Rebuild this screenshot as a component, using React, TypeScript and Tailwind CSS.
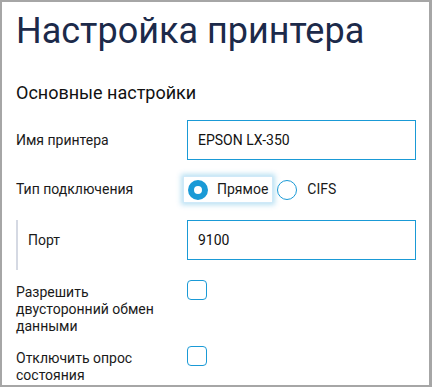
const labelCls = "text-[14px] leading-[17px] text-[#1a1a1a]";

function TextField({ value }: { value: string }) {
  return (
    <input
      type="text"
      defaultValue={value}
      className="w-full h-[40px] border border-[#1a9ad6] pl-[10px] text-[14px] text-[#111] outline-none [font-family:Roboto,sans-serif]"
    />
  );
}

function Checkbox() {
  return (
    <span className="block w-[20px] h-[20px] rounded-[4px] border border-[#1a9ad6] bg-white" />
  );
}

export default function App() {
  return (
    <div className="w-[432px] h-[387px] overflow-hidden bg-white border-2 border-r-[3px] border-[#a6a6a6] pl-[14px] pr-[13px] pt-[8px] [font-family:Roboto,sans-serif]">
      <h1 className="text-[36px] leading-[42px] text-[#1c2a4a]">Настройка принтера</h1>

      <h2 className="mt-[29px] text-[18px] leading-[24px] text-[#111]">Основные настройки</h2>

      {/* printer name */}
      <div className="mt-[15px] grid grid-cols-[171px_1fr] items-center">
        <span className={labelCls}>Имя принтера</span>
        <TextField value="EPSON LX-350" />
      </div>

      {/* connection type */}
      <div className="mt-[16px] grid grid-cols-[167px_1fr] items-center">
        <span className={labelCls}>Тип подключения</span>
        <div className="flex items-center">
          <label className="flex items-center gap-[9px] px-[4px] h-[27px] border border-[#cfe9f8] shadow-[0_0_5px_2px_rgba(26,154,214,0.3)]">
            <span className="block w-[20px] h-[20px] rounded-full border-[6px] border-[#1a9ad6] bg-white" />
            <span className={labelCls}>Прямое</span>
          </label>
          <label className="flex items-center gap-[10px] px-[4px] h-[27px]">
            <span className="block w-[20px] h-[20px] rounded-full border border-[#1a9ad6] bg-white" />
            <span className={labelCls}>CIFS</span>
          </label>
        </div>
      </div>

      {/* port, nested under connection type */}
      <div className="mt-[17px] border-l-2 border-[#d5d9e3] pl-[10px] pb-[10px] grid grid-cols-[159px_1fr] items-center">
        <span className={labelCls}>Порт</span>
        <TextField value="9100" />
      </div>

      <div className="mt-[10px] grid grid-cols-[171px_1fr] items-start">
        <span className={labelCls + " pt-[4px]"}>
          Разрешить
          <br />
          двусторонний обмен
          <br />
          данными
        </span>
        <Checkbox />
      </div>

      <div className="mt-[11px] grid grid-cols-[171px_1fr] items-start">
        <span className={labelCls + " pt-[4px]"}>
          Отключить опрос
          <br />
          состояния
        </span>
        <Checkbox />
      </div>
    </div>
  );
}
